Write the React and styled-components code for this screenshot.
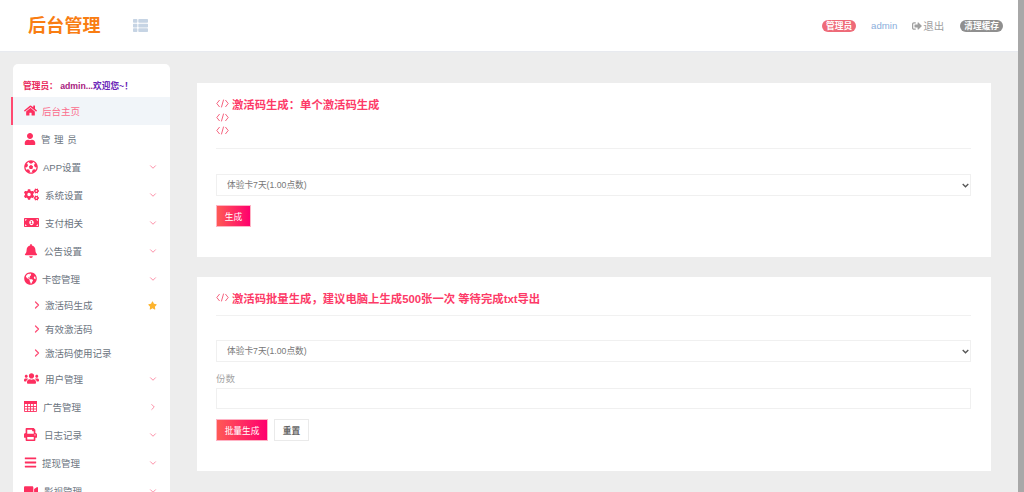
import React from 'react';
import styled, { createGlobalStyle } from 'styled-components';
import {
  FaHome, FaUser, FaFutbol, FaCogs, FaMoneyBillAlt, FaBell, FaGlobeAmericas, FaUsers,
  FaPrint, FaBars, FaVideo, FaStar, FaThList, FaSignOutAlt,
} from 'react-icons/fa';
import { FiChevronDown, FiChevronRight } from 'react-icons/fi';

const GlobalStyle = createGlobalStyle`
  html, body {
    margin: 0;
    height: 492px;
    overflow: hidden;
    background: #ededed;
    font-family: "Liberation Sans", "Noto Sans CJK SC", sans-serif;
  }
  * { box-sizing: border-box; }
`;

const Page = styled.div`
  display: flex;
  height: 492px;
  overflow: hidden;
`;

const Viewport = styled.div`
  flex: 1;
  min-width: 0;
`;

const Scrollbar = styled.div`
  width: 6px;
  background: #a8a8a8;
`;

const Header = styled.header`
  height: 51px;
  background: #fff;
  display: flex;
  align-items: center;
  padding: 0 15px 0 28px;
  box-shadow: 0 1px 1px #e8eaef;
`;

const Logo = styled.div`
  width: 105px;
  font-size: 18px;
  line-height: 24px;
  font-weight: 700;
  letter-spacing: 0.2px;
  color: #f97d12;
  white-space: nowrap;
`;

const MenuToggle = styled.span`
  display: flex;
  color: #c6d4e4;
  font-size: 15px;
`;

const HeaderRight = styled.div`
  margin-left: auto;
  display: flex;
  align-items: center;
`;

const Pill = styled.span`
  height: 12px;
  line-height: 12px;
  border-radius: 6px;
  padding: 0 4px;
  font-size: 8.7px;
  font-weight: 700;
  color: #fff;
  background: ${p => p.$color};
`;

const AdminName = styled.a`
  margin-left: 15px;
  font-size: 9.6px;
  color: #8aaedb;
`;

const Logout = styled.a`
  margin: 0 16px 0 15px;
  display: flex;
  align-items: center;
  gap: 1px;
  font-size: 10.5px;
  color: #a0a0a0;
  svg { font-size: 10px; }
`;

const Body = styled.div`
  display: flex;
  align-items: flex-start;
  height: 441px;
  overflow: hidden;
`;

const Sidebar = styled.aside`
  width: 157px;
  margin: 13px 0 0 13px;
  flex-shrink: 0;
  background: #fff;
  border-radius: 5px 5px 0 0;
`;

const Welcome = styled.div`
  height: 33px;
  padding: 16px 0 0 10px;
  font-size: 8.7px;
  line-height: 12px;
  font-weight: 700;
  white-space: nowrap;
  span:nth-child(1) { color: #e8285c; }
  span:nth-child(2) { color: #a8207e; }
  span:nth-child(3) { color: #6a1fb8; }
`;

const MenuRow = styled.div`
  position: relative;
  height: 28px;
  display: flex;
  align-items: center;
  padding: 0 12px 1px 11px;
  font-size: 9.5px;
  color: ${p => (p.$active ? '#fb6d8d' : '#6b7480')};
  background: ${p => (p.$active ? '#f1f5f9' : 'transparent')};
  letter-spacing: ${p => (p.$spaced ? '3.6px' : '0')};
  ${p => p.$active && 'box-shadow: inset 2px 0 0 #ff4a72; margin-left: -2px; padding-left: 13px;'}
`;

const MenuIcon = styled.span`
  width: ${p => p.$w}px;
  display: flex;
  align-items: center;
  flex-shrink: 0;
  color: #fd2f5f;
  font-size: ${p => p.$size || 14}px;
`;

const Caret = styled.span`
  margin-left: auto;
  display: flex;
  color: #fb7a96;
  font-size: 10px;
`;

const SubRow = styled.div`
  height: 24px;
  display: flex;
  align-items: center;
  padding: 0 13px 0 18px;
  font-size: 9.5px;
  color: #6b7480;
`;

const SubArrow = styled.span`
  display: flex;
  width: 14px;
  color: #fd4f76;
  font-size: 12px;
  svg { stroke-width: 2.5; }
`;

const StarMark = styled.span`
  margin-left: auto;
  display: flex;
  color: #fdb42e;
  font-size: 9px;
`;

const Main = styled.main`
  flex: 1;
  min-width: 0;
  padding: 32px 27px 0;
  display: flex;
  flex-direction: column;
  gap: 20px;
`;

const Card = styled.section`
  height: ${p => p.$height}px;
  background: #fff;
  padding: 14px 20px 0 19px;
`;

const TitleBlock = styled.div`
  height: ${p => p.$height}px;
  border-bottom: 1px solid #f1f1f1;
`;

const TitleLine = styled.div`
  height: 13.5px;
  display: flex;
  align-items: center;
  gap: 3px;
  font-size: 11.35px;
  font-weight: 700;
  color: #fd3a67;
  white-space: nowrap;
`;

const CodeMark = styled.svg`
  width: 13px;
  height: 9px;
  flex-shrink: 0;
`;

const arrow = encodeURIComponent(
  '<svg xmlns="http://www.w3.org/2000/svg" viewBox="0 0 7 5"><path d="M.7 1 3.5 3.8 6.3 1" fill="none" stroke="#555" stroke-width="1.3"/></svg>'
);

const SelectBox = styled.select`
  display: block;
  width: 100%;
  height: 22px;
  padding: 0 10px;
  font: 8.7px "Liberation Sans", "Noto Sans CJK SC", sans-serif;
  color: #777;
  appearance: none;
  background: #fff url("data:image/svg+xml,${arrow}") no-repeat right 1px center / 7px 5px;
  border: 1px solid #f0f0f0;
  border-radius: 0;
  margin-top: ${p => p.$top}px;
`;

const FieldLabel = styled.label`
  display: block;
  margin-top: 11px;
  font-size: 9.5px;
  line-height: 12px;
  color: #a4a4a4;
`;

const TextBox = styled.input`
  display: block;
  width: 100%;
  height: 21px;
  margin-top: 3px;
  border: 1px solid #f0f0f0;
  outline: 0;
`;

const ButtonRow = styled.div`
  margin-top: ${p => p.$top}px;
  display: flex;
  gap: 6px;
`;

const Button = styled.button`
  height: 22px;
  padding: 0;
  width: ${p => p.$w}px;
  font: 8.7px "Liberation Sans", "Noto Sans CJK SC", sans-serif;
  color: #fff;
  border: 1px solid #ffb3c5;
  background: linear-gradient(90deg, #fe5a55, #ff006e);
`;

const GhostButton = styled(Button)`
  border-color: #eaeaea;
  background: #fff;
  color: #666;
  font-weight: 700;
`;

const Code = () => (
  <CodeMark viewBox="0 0 13 9" fill="none" stroke="#f4506f" strokeWidth="0.9">
    <path d="M3.6 1 0.8 4.5 3.6 8M9.4 1 12.2 4.5 9.4 8M7.6 0.6 5.4 8.4" />
  </CodeMark>
);

// the old fa-table look: outlined grid with a solid top band
const TableGlyph = () => (
  <svg width="13" height="11" viewBox="0 0 13 11">
    <path fill="#fd2f5f" d="M0 0h13v3H0z" />
    <path fill="none" stroke="#fd2f5f" strokeWidth="0.9" d="M.45.5h12.1v10H.45zM.5 5.5h12M.5 8h12M3.6 2v8.5M6.5 2v8.5M9.4 2v8.5" />
  </svg>
);

const menuTop = [
  { label: '后台主页', Icon: FaHome, w: 18, size: 13, active: true },
  { label: '管理员', Icon: FaUser, w: 17, size: 12, spaced: true },
  { label: 'APP设置', Icon: FaFutbol, w: 19, caret: 'down' },
  { label: '系统设置', Icon: FaCogs, w: 21, size: 15, caret: 'down' },
  { label: '支付相关', Icon: FaMoneyBillAlt, w: 21, size: 15, caret: 'down' },
  { label: '公告设置', Icon: FaBell, w: 20, caret: 'down' },
  { label: '卡密管理', Icon: FaGlobeAmericas, w: 18, size: 13, caret: 'down' },
];

const subMenu = ['激活码生成', '有效激活码', '激活码使用记录'];

const menuBottom = [
  { label: '用户管理', Icon: FaUsers, w: 21, size: 15, caret: 'down' },
  { label: '广告管理', Icon: TableGlyph, w: 19, caret: 'right' },
  { label: '日志记录', Icon: FaPrint, w: 20, size: 13, caret: 'down' },
  { label: '提现管理', Icon: FaBars, w: 18, size: 13, caret: 'down' },
  { label: '影视管理', Icon: FaVideo, w: 20, size: 14, caret: 'down' },
];

const Item = ({ item }) => (
  <MenuRow $active={item.active} $spaced={item.spaced}>
    <MenuIcon $w={item.w} $size={item.size}><item.Icon /></MenuIcon>
    {item.label}
    {item.caret && (
      <Caret>{item.caret === 'down' ? <FiChevronDown /> : <FiChevronRight />}</Caret>
    )}
  </MenuRow>
);

export default function App() {
  return (
    <Page>
      <GlobalStyle />
      <Viewport>
        <Header>
          <Logo>后台管理</Logo>
          <MenuToggle><FaThList /></MenuToggle>
          <HeaderRight>
            <Pill $color="#ee6a78">管理员</Pill>
            <AdminName>admin</AdminName>
            <Logout><FaSignOutAlt />退出</Logout>
            <Pill $color="#8f8f8f">清理缓存</Pill>
          </HeaderRight>
        </Header>
        <Body>
          <Sidebar>
            <Welcome>
              <span>管理员：</span> <span>admin...</span><span>欢迎您~！</span>
            </Welcome>
            {menuTop.map(item => <Item key={item.label} item={item} />)}
            {subMenu.map((label, i) => (
              <SubRow key={label}>
                <SubArrow><FiChevronRight /></SubArrow>
                {label}
                {i === 0 && <StarMark><FaStar /></StarMark>}
              </SubRow>
            ))}
            {menuBottom.map(item => <Item key={item.label} item={item} />)}
          </Sidebar>
          <Main>
            <Card $height={174}>
              <TitleBlock $height={52}>
                <TitleLine><Code />激活码生成：单个激活码生成</TitleLine>
                <TitleLine><Code /></TitleLine>
                <TitleLine><Code /></TitleLine>
              </TitleBlock>
              <SelectBox $top={25}><option>体验卡7天(1.00点数)</option></SelectBox>
              <ButtonRow $top={9}><Button $w={35}>生成</Button></ButtonRow>
            </Card>
            <Card $height={194}>
              <TitleBlock $height={25}>
                <TitleLine><Code />激活码批量生成，建议电脑上生成500张一次 等待完成txt导出</TitleLine>
              </TitleBlock>
              <SelectBox $top={24}><option>体验卡7天(1.00点数)</option></SelectBox>
              <FieldLabel>份数</FieldLabel>
              <TextBox />
              <ButtonRow $top={10}>
                <Button $w={52}>批量生成</Button>
                <GhostButton $w={35}>重置</GhostButton>
              </ButtonRow>
            </Card>
          </Main>
        </Body>
      </Viewport>
      <Scrollbar />
    </Page>
  );
}
